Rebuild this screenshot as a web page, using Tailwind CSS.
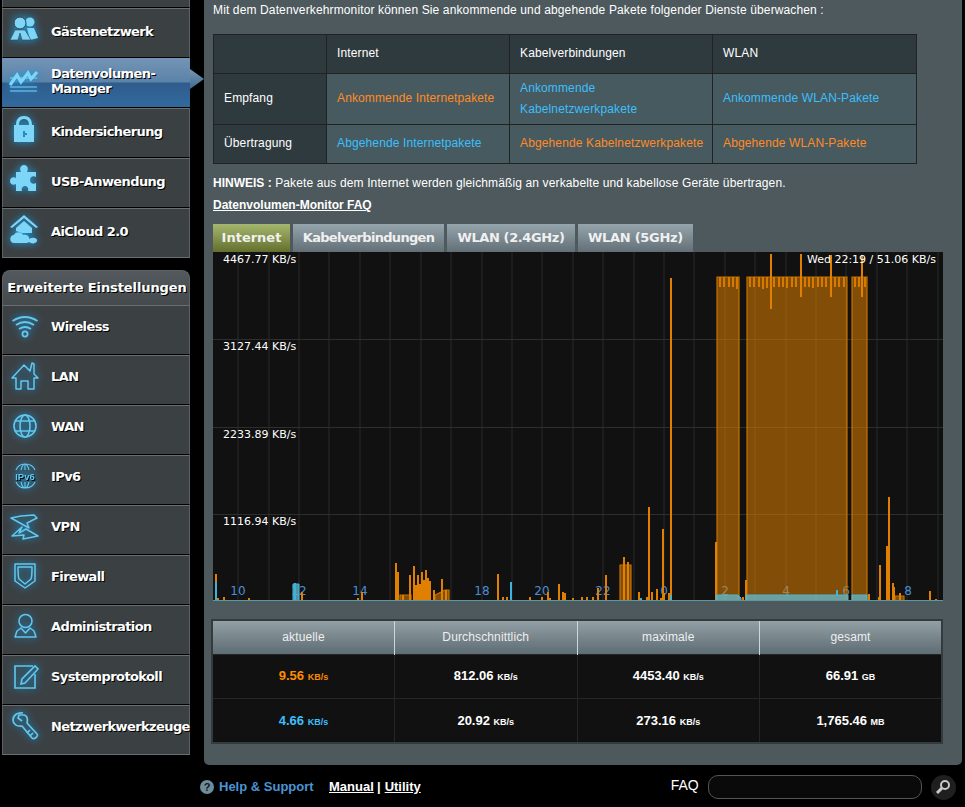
<!DOCTYPE html>
<html lang="de">
<head>
    <meta charset="UTF-8">
    <title>Datenvolumen-Manager</title>
    <script src="https://cdn.jsdelivr.net/npm/@tailwindcss/browser@4"></script>
</head>
<body class="bg-black h-screen overflow-hidden text-white text-[12px] tracking-[0.13px] [font-family:'Liberation_Sans',Arial,sans-serif]">

    <div class="flex items-start">
        <!-- linke Navigation -->
        <div class="w-[204px] pl-[2px] shrink-0 [font-family:'DejaVu_Sans',sans-serif] font-bold text-[13px] tracking-[-0.6px] leading-[15px] [text-shadow:1px_1px_0_#000]">
            <div class="w-[188px]">
                <div class="h-[8px] bg-[#3b4043] border-x border-x-[#5e6265] border-b border-b-black"></div>

                <div class="h-[50px] pb-[4px] bg-[#3b4043] border-x border-x-[#5e6265] border-t border-t-[#6a6e71] border-b border-b-black flex items-center">
                    <svg class="w-[30px] h-[30px] ml-[6px] mr-[12px] mb-[4px] shrink-0 drop-shadow-[0_0_4px_#1b9ce0]" viewBox="0 0 30 30" fill="#7dd6f7">
                        <circle cx="21" cy="8" r="4.5"/><path d="M18 14 L25 14 L29 24 L21 26 Z"/>
                        <circle cx="11" cy="9" r="6" stroke="#3b4043"/><path d="M1 26 L6 16 L16 16 L22 26 L13 26 L11 19 L9 26 Z" stroke="#3b4043" stroke-width=".6"/>
                    </svg>
                    <span>Gästenetzwerk</span>
                </div>

                <div class="relative h-[50px] pb-[4px] bg-[linear-gradient(#7394b6,#5c83a8_48%,#2f5c8c_52%,#326a9e)] border-b border-b-black flex items-center pl-px">
                    <svg class="w-[30px] h-[30px] ml-[6px] mr-[12px] mb-[4px] shrink-0 drop-shadow-[0_0_3px_#1b9ce0]" viewBox="0 0 30 30" fill="none" stroke="#7dd6f7">
                        <path d="M1 21 L8 11 L12 18 L19 9 L22 15 L28 8" stroke-width="3.2"/>
                        <path d="M1 14 H28 M1 23 H28 M1 27 H28" stroke-width="1.2"/>
                    </svg>
                    <span>Datenvolumen-<br>Manager</span>
                    <div class="absolute left-full top-[11px] w-[14px] h-[20px] bg-[linear-gradient(#7b97b3,#3e6a90)] [clip-path:polygon(0_0,100%_50%,0_100%)]"></div>
                </div>

                <div class="h-[50px] pb-[4px] bg-[#3b4043] border-x border-x-[#5e6265] border-t border-t-[#6a6e71] border-b border-b-black flex items-center">
                    <svg class="w-[30px] h-[30px] ml-[6px] mr-[12px] mb-[4px] shrink-0 drop-shadow-[0_0_4px_#1b9ce0]" viewBox="0 0 30 30" fill="#7dd6f7">
                        <path fill-rule="evenodd" d="M5 28 V11 H7 C7 5 10 2 15 2 C20 2 23 5 23 11 H25 V28 Z M10 11 H20 C20 7 18 5 15 5 C12 5 10 7 10 11 Z M14 17 V23 H16 V21 H18 V19 H16 V17 Z"/>
                    </svg>
                    <span>Kindersicherung</span>
                </div>

                <div class="h-[50px] pb-[4px] bg-[#3b4043] border-x border-x-[#5e6265] border-t border-t-[#6a6e71] border-b border-b-black flex items-center">
                    <svg class="w-[30px] h-[30px] ml-[6px] mr-[12px] mb-[4px] shrink-0 drop-shadow-[0_0_4px_#1b9ce0]" viewBox="0 0 30 30" fill="#7dd6f7">
                        <path d="M7 8 H12 C10 4 12 1 15 1 C18 1 20 4 18 8 H27 V13 C24 11 21 13 21 16 C21 19 24 21 27 19 V27 H19 C20 24 18 22 16 22 C14 22 12 24 13 27 H7 V20 C4 22 1 20 1 17 C1 14 4 12 7 14 Z"/>
                    </svg>
                    <span>USB-Anwendung</span>
                </div>

                <div class="h-[50px] pb-[4px] bg-[#3b4043] border-x border-x-[#5e6265] border-t border-t-[#6a6e71] border-b border-b-[#6a6e71] flex items-center">
                    <svg class="w-[30px] h-[30px] ml-[6px] mr-[12px] mb-[4px] shrink-0 drop-shadow-[0_0_4px_#1b9ce0]" viewBox="0 0 30 30" fill="#7dd6f7">
                        <path d="M1 13 L15 1 L29 13 L27 14 L15 4 L3 14 Z"/>
                        <path d="M7 14 L15 7 L23 14 V19 H13 L7 17 Z"/>
                        <path d="M5 29 C0 29 0 21 5 21 C7 17 13 18 14 21 C18 20 21 23 20 25 C25 22 29 25 28 27 C27 30 22 30 20 28 L18 29 Z"/>
                    </svg>
                    <span>AiCloud 2.0</span>
                </div>

                <!-- Erweiterte Einstellungen -->
                <div class="mt-[12px] h-[35px] rounded-t-lg border-x border-t border-[#5e6265] border-b-0 bg-[linear-gradient(#53595c,#44494c)] flex items-center justify-center pb-[2px] pl-[2px] tracking-[-0.1px] whitespace-nowrap">Erweiterte Einstellungen</div>

                <div class="h-[50px] pb-[8px] bg-[#3b4043] border-x border-x-[#5e6265] border-t border-t-[#6a6e71] border-b border-b-black flex items-center">
                    <svg class="w-[30px] h-[30px] ml-[6px] mr-[12px] shrink-0 drop-shadow-[0_0_4px_#1b9ce0]" viewBox="0 0 30 30" fill="none" stroke="#62c8ee" stroke-width="1.8">
                        <path d="M3.5 10 Q16 2 28.5 10 M7 14 Q16 8 25 14 M10 18 Q16 14 22 18"/>
                        <circle cx="16" cy="23" r="2.6"/>
                    </svg>
                    <span>Wireless</span>
                </div>

                <div class="h-[50px] pb-[8px] bg-[#3b4043] border-x border-x-[#5e6265] border-t border-t-[#6a6e71] border-b border-b-black flex items-center">
                    <svg class="w-[30px] h-[30px] ml-[6px] mr-[12px] shrink-0 drop-shadow-[0_0_4px_#1b9ce0]" viewBox="0 0 30 30" fill="none" stroke="#62c8ee" stroke-width="1.5" stroke-linejoin="round">
                        <path d="M3 17 L15 4 L21 10 L23 2 L25 3 V13 L29 17 L25 17 V28 H19 V20 H12 V28 H7 V17 Z"/>
                    </svg>
                    <span>LAN</span>
                </div>

                <div class="h-[50px] pb-[8px] bg-[#3b4043] border-x border-x-[#5e6265] border-t border-t-[#6a6e71] border-b border-b-black flex items-center">
                    <svg class="w-[30px] h-[30px] ml-[6px] mr-[12px] shrink-0 drop-shadow-[0_0_4px_#1b9ce0]" viewBox="0 0 30 30" fill="none" stroke="#62c8ee" stroke-width="1.6">
                        <circle cx="16" cy="15" r="11"/>
                        <ellipse cx="16" cy="15" rx="5" ry="11"/>
                        <path d="M6 10 H26 M6 20 H26"/>
                    </svg>
                    <span>WAN</span>
                </div>

                <div class="h-[50px] pb-[8px] bg-[#3b4043] border-x border-x-[#5e6265] border-t border-t-[#6a6e71] border-b border-b-black flex items-center">
                    <svg class="w-[30px] h-[30px] ml-[6px] mr-[12px] shrink-0 drop-shadow-[0_0_4px_#1b9ce0]" viewBox="0 0 30 30" fill="none" stroke="#62c8ee" stroke-width="1.1">
                        <path d="M7 9 C9 4 12 3 16 3 C20 3 24 4 26 9 M7 21 C9 26 12 27 16 27 C20 27 24 26 26 21 M12 9 C13 5 14 3 16 3 C18 3 19 5 20 9 M12 21 C13 25 14 27 16 27 C18 27 19 25 20 21 M16 3 V9 M16 21 V27"/>
                        <text x="16" y="19" text-anchor="middle" font-family="Liberation Sans" font-size="9.5" letter-spacing="0" fill="#62c8ee" stroke="none">IPv6</text>
                    </svg>
                    <span>IPv6</span>
                </div>

                <div class="h-[50px] pb-[8px] bg-[#3b4043] border-x border-x-[#5e6265] border-t border-t-[#6a6e71] border-b border-b-black flex items-center">
                    <svg class="w-[30px] h-[30px] ml-[6px] mr-[12px] shrink-0 drop-shadow-[0_0_4px_#1b9ce0]" viewBox="0 0 30 30" fill="none" stroke="#62c8ee" stroke-width="1.5" stroke-linejoin="round">
                        <path d="M2 7 L20 17 L18 12 L28 7 L25 4 L12 5 Z"/>
                        <path d="M3 25 L13 16 L10 22 L17 18 L29 25 L14 28 L15 24 Z"/>
                    </svg>
                    <span>VPN</span>
                </div>

                <div class="h-[50px] pb-[8px] bg-[#3b4043] border-x border-x-[#5e6265] border-t border-t-[#6a6e71] border-b border-b-black flex items-center">
                    <svg class="w-[30px] h-[30px] ml-[6px] mr-[12px] shrink-0 drop-shadow-[0_0_4px_#1b9ce0]" viewBox="0 0 30 30" fill="none" stroke="#62c8ee" stroke-width="1.5" stroke-linejoin="round">
                        <path d="M6 3 H26 V20 L16 27 L6 20 Z"/>
                        <path d="M9 6 H23 C23 12 23 16 22 18 L16 23 L10 18 C9 16 9 12 9 6 Z"/>
                    </svg>
                    <span>Firewall</span>
                </div>

                <div class="h-[50px] pb-[8px] bg-[#3b4043] border-x border-x-[#5e6265] border-t border-t-[#6a6e71] border-b border-b-black flex items-center">
                    <svg class="w-[30px] h-[30px] ml-[6px] mr-[12px] shrink-0 drop-shadow-[0_0_4px_#1b9ce0]" viewBox="0 0 30 30" fill="none" stroke="#62c8ee" stroke-width="1.5" stroke-linejoin="round">
                        <circle cx="16.5" cy="10" r="6.5"/>
                        <path d="M6 26 L8 20 L12 17 L16.5 22 L21 17 L25 20 L27 26 Z"/>
                    </svg>
                    <span>Administration</span>
                </div>

                <div class="h-[50px] pb-[8px] bg-[#3b4043] border-x border-x-[#5e6265] border-t border-t-[#6a6e71] border-b border-b-black flex items-center">
                    <svg class="w-[30px] h-[30px] ml-[6px] mr-[12px] shrink-0 drop-shadow-[0_0_4px_#1b9ce0]" viewBox="0 0 30 30" fill="none" stroke="#62c8ee" stroke-width="1.6">
                        <path d="M24 5 H6 V27 H26 V13"/>
                        <path d="M12 23 L13 18 L26 5 L29 8 L16 22 Z"/>
                    </svg>
                    <span>Systemprotokoll</span>
                </div>

                <div class="h-[50px] pb-[8px] bg-[#3b4043] border-x border-x-[#5e6265] border-t border-t-[#6a6e71] border-b border-b-[#6a6e71] flex items-center whitespace-nowrap">
                    <svg class="w-[30px] h-[30px] ml-[6px] mr-[12px] shrink-0 drop-shadow-[0_0_4px_#1b9ce0]" viewBox="0 0 30 30" fill="none" stroke="#62c8ee" stroke-width="1.7" stroke-linejoin="round">
                        <path d="M14 2 C9 1 4 4 4 9 C4 13 8 16 13 15 L23 27 C25 29 30 25 28 23 L18 12 C19 8 18 5 15 4 L10 4 L9 7 L13 10"/>
                        <path d="M21 19 L18 22 M24 22 L21 25"/>
                    </svg>
                    <span>Netzwerkwerkzeuge</span>
                </div>
            </div>
        </div>

        <!-- Hauptbereich -->
        <div class="w-[758px] h-[765px] pl-[9px] bg-[#4d595d] rounded-b-[5px] shrink-0">
            <div class="h-[20px] leading-[20px] whitespace-nowrap">Mit dem Datenverkehrmonitor können Sie ankommende und abgehende Pakete folgender Dienste überwachen :</div>

            <table class="mt-[14px] w-[703px] table-fixed border-collapse border border-[#222]">
                <tr class="h-[39px] bg-[#2f3a3e]">
                    <th class="w-[113px] border border-[#222]"></th>
                    <th class="w-[183px] border border-[#222] pl-[10px] pb-[2px] text-left font-normal">Internet</th>
                    <th class="w-[203px] border border-[#222] pl-[10px] pb-[2px] text-left font-normal">Kabelverbindungen</th>
                    <th class="w-[204px] border border-[#222] pl-[10px] pb-[2px] text-left font-normal">WLAN</th>
                </tr>
                <tr class="h-[51px] bg-[#475a5f]">
                    <th class="border border-[#222] pl-[10px] pb-[2px] text-left font-normal bg-[#2f3a3e]">Empfang</th>
                    <td class="border border-[#222] pl-[10px] pb-[2px] text-[#ff8a26]">Ankommende Internetpakete</td>
                    <td class="border border-[#222] pl-[10px] text-[#3cbffc] leading-[21px]">Ankommende<br>Kabelnetzwerkpakete</td>
                    <td class="border border-[#222] pl-[10px] pb-[2px] text-[#3cbffc]">Ankommende WLAN-Pakete</td>
                </tr>
                <tr class="h-[39px] bg-[#475a5f]">
                    <th class="border border-[#222] pl-[10px] pb-[2px] text-left font-normal bg-[#2f3a3e]">Übertragung</th>
                    <td class="border border-[#222] pl-[10px] pb-[2px] text-[#3cbffc]">Abgehende Internetpakete</td>
                    <td class="border border-[#222] pl-[10px] pb-[2px] text-[#ff8a26]">Abgehende Kabelnetzwerkpakete</td>
                    <td class="border border-[#222] pl-[10px] pb-[2px] text-[#ff8a26]">Abgehende WLAN-Pakete</td>
                </tr>
            </table>

            <div class="mt-[9px] h-[20px] leading-[20px] whitespace-nowrap"><b class="tracking-normal">HINWEIS :</b> Pakete aus dem Internet werden gleichmäßig an verkabelte und kabellose Geräte übertragen.</div>
            <div class="mt-[2px] h-[20px] leading-[20px] font-bold underline tracking-normal">Datenvolumen-Monitor FAQ</div>

            <!-- Tabs -->
            <div class="mt-[9px] flex gap-[3px] h-[28px] [font-family:'DejaVu_Sans',sans-serif] font-bold text-[13px] text-[#f0f0f0]">
                <div class="w-[77px] flex items-center justify-center tracking-normal bg-[linear-gradient(#a5b76e,#646f2e)]">Internet</div>
                <div class="w-[151px] flex items-center justify-center tracking-[-0.7px] bg-[linear-gradient(#96a4ab,#626f76)]">Kabelverbindungen</div>
                <div class="w-[128px] flex items-center justify-center tracking-[-0.4px] bg-[linear-gradient(#96a4ab,#626f76)]">WLAN (2.4GHz)</div>
                <div class="w-[115px] flex items-center justify-center tracking-[-0.3px] bg-[linear-gradient(#96a4ab,#626f76)]">WLAN (5GHz)</div>
            </div>

            <!-- Diagramm -->
            <svg class="block w-[730px] h-[349px] bg-[#111] tracking-normal" viewBox="213 252 730 349" font-family="DejaVu Sans" font-size="11">
                <path stroke="#1d1d1d" stroke-width="2" d="M238 252V601M269 252V601M299 252V601M329 252V601M360 252V601M390 252V601M421 252V601M451 252V601M482 252V601M512 252V601M542 252V601M573 252V601M603 252V601M634 252V601M664 252V601M694 252V601M725 252V601M755 252V601M786 252V601M816 252V601M846 252V601M877 252V601M907 252V601M938 252V601"/>
                <path stroke="#2e2e2e" d="M213 339.5H943M213 427.5H943M213 514.5H943"/>
                <g fill="#4a8fd6" text-anchor="middle" font-size="12">
                    <text x="238" y="595">10</text><text x="299" y="595">12</text><text x="360" y="595">14</text>
                    <text x="421" y="595">16</text><text x="482" y="595">18</text><text x="542" y="595">20</text>
                    <text x="603" y="595">22</text><text x="664" y="595">0</text><text x="725" y="595">2</text>
                    <text x="786" y="595">4</text><text x="846" y="595">6</text><text x="908" y="595">8</text>
                </g>

                <!-- Empfang -->
                <g fill="#e07f00" fill-opacity=".55" stroke="#c67300" stroke-width="1.2">
                    <path d="M717 601V277H739V601Z"/><path d="M747 601V277H847V601Z"/><path d="M852 601V277H867V601Z"/>
                    <path d="M620 601V565H631V601Z"/><path d="M400 601V595H411V601Z"/><path d="M435 601V595L445 590H449V601Z"/><path d="M895 601V596H904V601Z"/>
                </g>
                <path fill="none" stroke="#d97a00" stroke-width="2" d="M720 277V287M724 277V287M729 277V287M733 277V287M737 277V289M750 277V287M754 277V287M759 277V287M763 277V289M767 277V288M774 277V287M779 277V287M783 277V287M787 277V288M792 277V287M796 277V287M805 277V287M809 277V287M813 277V288M818 277V287M822 277V287M826 277V287M835 277V287M839 277V287M844 277V287M855 277V287M859 277V287M865 277V287"/>
                <path fill="none" stroke="#e07f00" stroke-width="2" d="M216 601V574M218 601V598M224 601V597M249 601V598M302 601V592M333 601V600M358 601V598M362 601V592
                    M396 601V563M398 601V572M403 601V595M410 601V575M414 601V566M416 601V585M418 601V575M420 601V584M422 601V572M424 601V580M426 601V570M428 601V578M430 601V581M434 601V590M442 601V579M446 601V590
                    M498 601V574M503 601V597M507 601V597M530 601V597M542 601V597M548 601V592M550 601V598M559 601V584M563 601V592M565 601V593M573 601V598M582 601V597
                    M587 601V597M593 601V597M598 601V588M606 601V575M613 601V600M624 601V557M628 601V562M639 601V592M647 601V597M649 601V507M652 601V592M657 601V589M661 601V598M663 601V529M664 601V593M669 601V593M671 601V278
                    M716 601V542M743 601V597M746 601V580M771 309V254M801 297V254M831 297V255M862 297V255
                    M869 601V594M874 601V600M879 601V597M880 601V565M887 601V546M889 601V497M893 601V583M894 601V587M900 601V593M930 601V591M936 601V599"/>

                <!-- Übertragung -->
                <g fill="#62bcd4" fill-opacity=".75" stroke="#4bb6d6">
                    <path d="M716 601V595H738L741 598V601Z"/><path d="M746 601V595H848V601Z"/><path d="M852 601V595H867V601Z"/><path d="M293 601V584H299V601Z"/>
                </g>
                <path fill="none" stroke="#3fb2dc" stroke-width="2" d="M216 601V582M295 601V583M511 601V582M641 601V598M671 601V595M837 595V590"/>
                <path stroke="#5a9a9e" d="M213 600.5H943"/>

                <g fill="#fff">
                    <text x="223" y="263">4467.77 KB/s</text>
                    <text x="223" y="350">3127.44 KB/s</text>
                    <text x="223" y="438">2233.89 KB/s</text>
                    <text x="223" y="525">1116.94 KB/s</text>
                    <text x="936" y="263" text-anchor="end">Wed 22:19 / 51.06 KB/s</text>
                </g>
            </svg>

            <!-- Statistik -->
            <table class="-ml-[2px] mt-[18px] w-[732px] table-fixed border-collapse border-2 border-[#333b3f] text-center">
                <tr class="h-[34px] bg-[linear-gradient(#94a1a7,#5e6c73)] text-[#eee]">
                    <th class="font-normal border-r border-r-[#cfd6d9]">aktuelle</th>
                    <th class="font-normal border-r border-r-[#cfd6d9]">Durchschnittlich</th>
                    <th class="font-normal border-r border-r-[#cfd6d9]">maximale</th>
                    <th class="font-normal">gesamt</th>
                </tr>
                <tr class="h-[44px] bg-[#111] font-bold text-[13px] tracking-normal">
                    <td class="border border-[#262626] text-[#ff8a00]">9.56 <span class="text-[9px]">KB/s</span></td>
                    <td class="border border-[#262626]">812.06 <span class="text-[9px]">KB/s</span></td>
                    <td class="border border-[#262626]">4453.40 <span class="text-[9px]">KB/s</span></td>
                    <td class="border border-[#262626]">66.91 <span class="text-[9px]">GB</span></td>
                </tr>
                <tr class="h-[45px] bg-[#111] font-bold text-[13px] tracking-normal">
                    <td class="border border-[#262626] text-[#3cbffc]">4.66 <span class="text-[9px]">KB/s</span></td>
                    <td class="border border-[#262626]">20.92 <span class="text-[9px]">KB/s</span></td>
                    <td class="border border-[#262626]">273.16 <span class="text-[9px]">KB/s</span></td>
                    <td class="border border-[#262626]">1,765.46 <span class="text-[9px]">MB</span></td>
                </tr>
            </table>
        </div>
    </div>

    <!-- Fusszeile -->
    <div class="h-[42px] pt-[2px] flex items-center pl-[200px] text-[14px] tracking-normal whitespace-nowrap">
        <div class="w-[14px] h-[14px] rounded-full bg-[#6e8c9b] text-[#10181c] text-[11px] font-bold flex items-center justify-center">?</div>
        <span class="ml-[5px] w-[95px] text-[13px] font-bold text-[#4b94d4]">Help &amp; Support</span>
        <span class="ml-[15px] w-[45px] text-[13px] font-bold underline">Manual</span>
        <span class="ml-[3px] font-bold text-[13px]">|</span>
        <span class="ml-[4px] w-[36px] text-[13px] font-bold underline">Utility</span>
        <span class="ml-[250px] -translate-y-[2px]">FAQ</span>
        <div class="ml-[9px] w-[214px] h-[24px] rounded-[10px] border border-[#555] bg-[#0a0a0a]"></div>
        <div class="ml-[9px] w-[25px] h-[25px] rounded-full bg-[#1f1f1f] flex items-center justify-center">
            <svg class="w-[16px] h-[16px]" viewBox="0 0 16 16" fill="none" stroke="#c9c9c9">
                <circle cx="10" cy="6" r="4" stroke-width="2"/>
                <path d="M7 9 L2 14" stroke-width="3"/>
            </svg>
        </div>
    </div>

</body>
</html>
